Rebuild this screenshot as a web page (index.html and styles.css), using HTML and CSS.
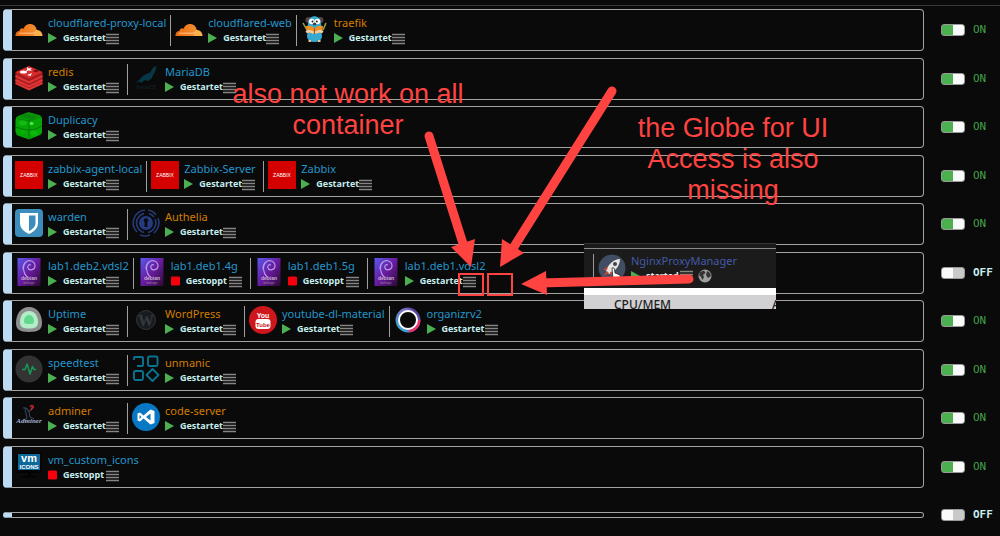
FILE: index.html
```html
<!DOCTYPE html>
<html lang="de">
<head>
<meta charset="utf-8">
<meta name="viewport" content="width=device-width, initial-scale=1">
<title>Docker</title>
<link rel="stylesheet" href="styles.css">
</head>
<body>
<svg class="defs" aria-hidden="true">
  <defs>
    <linearGradient id="g-cloud" x1="0" x2="1"><stop offset="0" stop-color="#e86a10"/><stop offset="1" stop-color="#f79031"/></linearGradient>
    <linearGradient id="g-deb" x1="0" y1="0" x2="1" y2="1"><stop offset="0" stop-color="#5a58ee"/><stop offset=".5" stop-color="#6a1b9f"/><stop offset="1" stop-color="#2b0a35"/></linearGradient>
    <linearGradient id="g-ring" x1="1" y1="0" x2="0" y2="1"><stop offset="0" stop-color="#3b2a86"/><stop offset=".35" stop-color="#8575c8"/><stop offset=".7" stop-color="#4a86c8"/><stop offset="1" stop-color="#35b8dc"/></linearGradient>
  </defs>
  <symbol id="play" viewBox="0 0 9 10"><path d="M0 0L9 5L0 10Z" fill="#4caf50"/></symbol>
  <symbol id="stop" viewBox="0 0 10 10"><rect width="10" height="10" rx="1.5" fill="#f5000c"/></symbol>
  <symbol id="bars" viewBox="0 0 13 12"><path d="M0 1.500H13M0 4.500H13M0 7.500H13M0 10.500H13" stroke="#858585" stroke-width="1.400"/></symbol>
  <symbol id="cloudflare" viewBox="0 0 28 28">
    <path d="M.5 21C.3 17.800 2 16 4.500 16C4.500 13.500 7 12.500 8.500 13.700C10 10 13 8.700 15.500 9C19 9.300 21 11.500 21.700 14.500L20 21Z" fill="url(#g-cloud)"/>
    <path d="M18.500 21L20.500 15.200C24.500 14.500 27.700 17.500 27.500 21Z" fill="#fbb04c"/>
    <path d="M4 18.200H18.500Q20 18.200 20.500 16.500" fill="none" stroke="#ffd9a8" stroke-width=".8"/>
  </symbol>
  <symbol id="traefik" viewBox="0 0 28 28">
    <circle cx="7.500" cy="5" r="3" fill="#5b3f40"/><circle cx="19.500" cy="5" r="3" fill="#5b3f40"/>
    <path d="M2 8L6 15M25 8L22 15" stroke="#a5a644" stroke-width="1.500"/>
    <path d="M7 8C7-1 20-1 20 8L21 22Q20 27 13.500 27Q7 27 6 22Z" fill="#35a9cf"/>
    <circle cx="10.800" cy="6.500" r="2.800" fill="#fff"/><circle cx="16.400" cy="6.500" r="2.800" fill="#fff"/>
    <circle cx="11.500" cy="6.500" r="1" fill="#222"/><circle cx="15.800" cy="6.500" r="1" fill="#222"/>
    <ellipse cx="13.600" cy="9" rx="1.800" ry="1.200" fill="#4b3835"/>
    <path d="M5 11Q10 10 13.500 13Q17 10 22 11L21 18Q17 17 13.500 19Q10 17 6 18Z" fill="#ef9026"/>
    <path d="M5 17Q9 15 12.500 18M22 17Q18 15 14.500 18" stroke="#efd0ab" stroke-width="2.500" fill="none"/>
    <path d="M13.500 13V19" stroke="#9e5717"/><path d="M7.500 26H10M17 26H19.500" stroke="#e4c29c" stroke-width="2"/>
  </symbol>
  <symbol id="redis" viewBox="0 0 28 28">
    <path d="M.5 8V19L14 26L27.500 19V8Z" fill="#a51c20"/>
    <path d="M.5 8L14 2L27.500 8L14 14.500Z" fill="#d82b2c"/>
    <path d="M.5 12L14 18.500L27.500 12M.5 16L14 22.500L27.500 16M.5 19L14 25.500L27.500 19" fill="none" stroke="#df3535" stroke-width="2"/>
    <path d="M12 3L14 4.500L17 4L15.500 5.500L17 7L14 6.500L11 7L12 5.500Z" fill="#fff"/>
    <ellipse cx="8.500" cy="8" rx="3.500" ry="1.500" fill="#fff"/><path d="M12 11L17 9L15.500 12Z" fill="#fff"/><path d="M18 7L21 5.500L24 7L21 8.500Z" fill="#761014"/>
  </symbol>
  <symbol id="mariadb" viewBox="0 0 28 28">
    <path d="M24.500 2C21 3 20 5 18.500 8C16 10 12 10 9 14L4 19L8 17.500L9 19L13 16L16 17L20 14C21 10 24 8 24.500 2Z" fill="#073747"/>
  </symbol>
  <symbol id="cube" viewBox="0 0 28 28">
    <path d="M3 4Q.5 5 .5 8V20Q1 23 4 24L14 27.500L25 23Q27 22 27 20V7Q27 4 24 3L15 .5Q13 0 11 1Z" fill="#05a605"/>
    <path d="M3 5L12 1L25 4L15 8Z" fill="#068c06"/>
    <path d="M1 15Q8 18 14 18Q21 18 27 14M14 8V27" stroke="#057905" fill="none"/>
    <path d="M2 6Q9 9 14 8.500Q20 8 26 5M8 3Q13 3 19 6" stroke="#0b7a0b" fill="none" stroke-width=".8"/>
    <ellipse cx="16.500" cy="11.500" rx="2" ry="1.800" fill="#4be84b"/><ellipse cx="8" cy="11" rx="4" ry="2.500" fill="#10bd10"/><ellipse cx="19" cy="21" rx="4" ry="2.500" fill="#0bb80b"/><ellipse cx="8" cy="20" rx="3" ry="2" fill="#09b009"/>
  </symbol>
  <symbol id="zabbix" viewBox="0 0 28 28"><rect width="28" height="28" fill="#d40000"/></symbol>
  <symbol id="warden" viewBox="0 0 28 28"><rect width="28" height="28" rx="4" fill="#3c8dbc"/><path d="M5 4H23V14C23 20 18 23 14 25C10 23 5 20 5 14Z" fill="#fff"/><path d="M14 6.500H20.500V14C20.500 18 17 20.500 14 22Z" fill="#3c8dbc"/></symbol>
  <symbol id="authelia" viewBox="0 0 28 28">
    <g fill="none" stroke="#263a78" stroke-width="1.600"><path d="M13 1A13 13 0 0 0 5 23M22 24A13 13 0 0 0 26 9M16 1A13 13 0 0 1 24 6"/><path d="M12 4.500A9.800 9.800 0 0 0 4.500 14A9.800 9.800 0 0 0 12 23.500M16 23.500A9.800 9.800 0 0 0 23 10M8 26A13 13 0 0 0 18 26M17 4.500A10 10 0 0 1 22 8"/></g>
    <circle cx="14" cy="14" r="7" fill="#243b80"/><circle cx="14" cy="11.500" r="2.300" fill="#0a0b12"/><path d="M13 12H15L15.700 18H12.300Z" fill="#0a0b12"/>
  </symbol>
  <symbol id="debian" viewBox="0 0 28 28">
    <rect x="2.500" width="23" height="28" fill="url(#g-deb)"/>
    <path d="M12 19C8 15 7 8 11 4C14 1 20 3 20 8C20 12 14 13 13 10C12 8 14 6 16 7M11 4C8 6 8 9 8 11" fill="none" stroke="#b29be6" stroke-width="1.200"/>
  </symbol>
  <symbol id="uptime" viewBox="0 0 28 28"><path d="M14 1C23 1 27 9 27 17C27 23 24 26 14 26C4 26 1 23 1 17C1 9 5 1 14 1Z" fill="#8c8f8d"/><path d="M14 5C20 5 23 10 23 16C23 21 20 22.500 14 22.500C8 22.500 5 21 5 16C5 10 8 5 14 5Z" fill="#b2edc8"/><path d="M14 9C17 9 19 12 19 15C19 18 17 18 14 18C11 18 9 18 9 15C9 12 11 9 14 9Z" fill="#62d98d"/></symbol>
  <symbol id="wordpress" viewBox="0 0 28 28"><circle cx="14" cy="14" r="9.500" fill="#191b1e" stroke="#30343a"/></symbol>
  <symbol id="youtube" viewBox="0 0 28 28"><circle cx="14" cy="14" r="14" fill="#cd171c"/><rect x="6.500" y="13" width="15" height="10" rx="3" fill="#fff"/></symbol>
  <symbol id="organizr" viewBox="0 0 28 28"><circle cx="14" cy="14" r="10.700" fill="none" stroke="url(#g-ring)" stroke-width="3.500"/><path d="M15 25A11 11 0 0 0 25 14" fill="none" stroke="#e9306d" stroke-width="3"/><circle cx="14" cy="14" r="9" fill="none" stroke="#fff" stroke-width="2"/></symbol>
  <symbol id="speed" viewBox="0 0 28 28"><circle cx="14" cy="14" r="13.500" fill="#333"/><path d="M7 14.500H10L12 9L15 19L17.500 11.500L19 14.500H21" fill="none" stroke="#159b57" stroke-width="1.500" stroke-linejoin="round"/></symbol>
  <symbol id="unmanic" viewBox="0 0 28 28"><g fill="none" stroke="#087392" stroke-width="1.900"><path d="M2 5V3Q2 2 3 2H10Q11 2 11 3V10Q11 11 10 11H5"/><rect x="2" y="16" width="9" height="9" rx="1.500"/><rect x="16" y="1.500" width="9.500" height="9.500" rx="1.500"/><path d="M20.500 14L26.500 20L20.500 26L14.500 20Z" stroke-linejoin="round"/></g></symbol>
  <symbol id="adminer" viewBox="0 0 28 28"><path d="M8 5C12 4 13 7 14 9C16 7 17 6 17 4M10 6L12 15L9 17M14 9L15 14L19 16" fill="none" stroke="#394558" stroke-width="1.100"/><path d="M15 4Q17 1 18.500 4L16 7" stroke="#d9252c" stroke-width="1.300" fill="none"/></symbol>
  <symbol id="code" viewBox="0 0 28 28"><circle cx="14" cy="14" r="14" fill="#0877c4"/><path d="M18.500 6.500L22.500 8V20L18.500 21.500L11.500 15.500L8 18.500L5.500 17.500V10.500L8 9.500L11.500 12.500ZM18.500 10.500L14 14L18.500 17.500ZM7.500 12V16L9.500 14Z" fill="#fff" fill-rule="evenodd"/></symbol>
  <symbol id="vm" viewBox="0 0 28 28"><path d="M1.500 1H26.500V21H1.500Z" fill="#030303"/><rect x="3" y="2" width="22" height="16" fill="#0e699b"/><path d="M13 20H16V24H21V25.500H7V24H13Z" fill="#020202"/></symbol>
</svg>

<main class="docker">
  <section class="row">
    <div class="folder">
      <article class="app"><svg class="logo"><use href="#cloudflare"/></svg><div class="info"><a class="name" href="#">cloudflared-proxy-local</a><span class="state"><svg class="mark"><use href="#play"/></svg><b>Gestartet</b><button class="menu" aria-label="Menü"><svg><use href="#bars"/></svg></button></span></div></article>
      <article class="app"><svg class="logo"><use href="#cloudflare"/></svg><div class="info"><a class="name" href="#">cloudflared-web</a><span class="state"><svg class="mark"><use href="#play"/></svg><b>Gestartet</b><button class="menu" aria-label="Menü"><svg><use href="#bars"/></svg></button></span></div></article>
      <article class="app"><svg class="logo"><use href="#traefik"/></svg><div class="info"><a class="name update" href="#">traefik</a><span class="state"><svg class="mark"><use href="#play"/></svg><b>Gestartet</b><button class="menu" aria-label="Menü"><svg><use href="#bars"/></svg></button></span></div></article>
    </div>
    <label class="auto"><input type="checkbox" checked><span>ON</span></label>
  </section>
  <section class="row">
    <div class="folder">
      <article class="app"><svg class="logo"><use href="#redis"/></svg><div class="info"><a class="name update" href="#">redis</a><span class="state"><svg class="mark"><use href="#play"/></svg><b>Gestartet</b><button class="menu" aria-label="Menü"><svg><use href="#bars"/></svg></button></span></div></article>
      <article class="app"><svg class="logo"><use href="#mariadb"/><text x="14" y="25" class="logo-mariadb">MariaDB</text></svg><div class="info"><a class="name" href="#">MariaDB</a><span class="state"><svg class="mark"><use href="#play"/></svg><b>Gestartet</b><button class="menu" aria-label="Menü"><svg><use href="#bars"/></svg></button></span></div></article>
    </div>
    <label class="auto"><input type="checkbox" checked><span>ON</span></label>
  </section>
  <section class="row">
    <div class="folder">
      <article class="app"><svg class="logo"><use href="#cube"/></svg><div class="info"><a class="name" href="#">Duplicacy</a><span class="state"><svg class="mark"><use href="#play"/></svg><b>Gestartet</b><button class="menu" aria-label="Menü"><svg><use href="#bars"/></svg></button></span></div></article>
    </div>
    <label class="auto"><input type="checkbox" checked><span>ON</span></label>
  </section>
  <section class="row">
    <div class="folder">
      <article class="app"><svg class="logo"><use href="#zabbix"/><text x="14" y="16" class="logo-zabbix">ZABBIX</text></svg><div class="info"><a class="name" href="#">zabbix-agent-local</a><span class="state"><svg class="mark"><use href="#play"/></svg><b>Gestartet</b><button class="menu" aria-label="Menü"><svg><use href="#bars"/></svg></button></span></div></article>
      <article class="app"><svg class="logo"><use href="#zabbix"/><text x="14" y="16" class="logo-zabbix">ZABBIX</text></svg><div class="info"><a class="name" href="#">Zabbix-Server</a><span class="state"><svg class="mark"><use href="#play"/></svg><b>Gestartet</b><button class="menu" aria-label="Menü"><svg><use href="#bars"/></svg></button></span></div></article>
      <article class="app"><svg class="logo"><use href="#zabbix"/><text x="14" y="16" class="logo-zabbix">ZABBIX</text></svg><div class="info"><a class="name" href="#">Zabbix</a><span class="state"><svg class="mark"><use href="#play"/></svg><b>Gestartet</b><button class="menu" aria-label="Menü"><svg><use href="#bars"/></svg></button></span></div></article>
    </div>
    <label class="auto"><input type="checkbox" checked><span>ON</span></label>
  </section>
  <section class="row">
    <div class="folder">
      <article class="app"><svg class="logo"><use href="#warden"/></svg><div class="info"><a class="name" href="#">warden</a><span class="state"><svg class="mark"><use href="#play"/></svg><b>Gestartet</b><button class="menu" aria-label="Menü"><svg><use href="#bars"/></svg></button></span></div></article>
      <article class="app"><svg class="logo"><use href="#authelia"/></svg><div class="info"><a class="name update" href="#">Authelia</a><span class="state"><svg class="mark"><use href="#play"/></svg><b>Gestartet</b><button class="menu" aria-label="Menü"><svg><use href="#bars"/></svg></button></span></div></article>
    </div>
    <label class="auto"><input type="checkbox" checked><span>ON</span></label>
  </section>
  <section class="row">
    <div class="folder">
      <article class="app"><svg class="logo"><use href="#debian"/><text x="14" y="22" class="logo-debian">debian</text><text x="14" y="26" class="logo-debian-sub">bullseye</text></svg><div class="info"><a class="name" href="#">lab1.deb2.vdsl2</a><span class="state"><svg class="mark"><use href="#play"/></svg><b>Gestartet</b><button class="menu" aria-label="Menü"><svg><use href="#bars"/></svg></button></span></div></article>
      <article class="app"><svg class="logo"><use href="#debian"/><text x="14" y="22" class="logo-debian">debian</text><text x="14" y="26" class="logo-debian-sub">bullseye</text></svg><div class="info"><a class="name" href="#">lab1.deb1.4g</a><span class="state"><svg class="mark"><use href="#stop"/></svg><b>Gestoppt</b><button class="menu" aria-label="Menü"><svg><use href="#bars"/></svg></button></span></div></article>
      <article class="app"><svg class="logo"><use href="#debian"/><text x="14" y="22" class="logo-debian">debian</text><text x="14" y="26" class="logo-debian-sub">bullseye</text></svg><div class="info"><a class="name" href="#">lab1.deb1.5g</a><span class="state"><svg class="mark"><use href="#stop"/></svg><b>Gestoppt</b><button class="menu" aria-label="Menü"><svg><use href="#bars"/></svg></button></span></div></article>
      <article class="app"><svg class="logo"><use href="#debian"/><text x="14" y="22" class="logo-debian">debian</text><text x="14" y="26" class="logo-debian-sub">bullseye</text></svg><div class="info"><a class="name" href="#">lab1.deb1.vdsl2</a><span class="state"><svg class="mark"><use href="#play"/></svg><b>Gestartet</b><button class="menu" aria-label="Menü"><svg><use href="#bars"/></svg></button></span></div></article>
    </div>
    <label class="auto"><input type="checkbox"><span>OFF</span></label>
  </section>
  <section class="row">
    <div class="folder">
      <article class="app"><svg class="logo"><use href="#uptime"/></svg><div class="info"><a class="name" href="#">Uptime</a><span class="state"><svg class="mark"><use href="#play"/></svg><b>Gestartet</b><button class="menu" aria-label="Menü"><svg><use href="#bars"/></svg></button></span></div></article>
      <article class="app"><svg class="logo"><use href="#wordpress"/><text x="14" y="20" class="logo-wp">W</text></svg><div class="info"><a class="name update" href="#">WordPress</a><span class="state"><svg class="mark"><use href="#play"/></svg><b>Gestartet</b><button class="menu" aria-label="Menü"><svg><use href="#bars"/></svg></button></span></div></article>
      <article class="app"><svg class="logo"><use href="#youtube"/><text x="14" y="12" class="logo-yt">You</text><text x="14" y="21" class="logo-yt logo-yt-red">Tube</text></svg><div class="info"><a class="name" href="#">youtube-dl-material</a><span class="state"><svg class="mark"><use href="#play"/></svg><b>Gestartet</b><button class="menu" aria-label="Menü"><svg><use href="#bars"/></svg></button></span></div></article>
      <article class="app"><svg class="logo"><use href="#organizr"/></svg><div class="info"><a class="name" href="#">organizrv2</a><span class="state"><svg class="mark"><use href="#play"/></svg><b>Gestartet</b><button class="menu" aria-label="Menü"><svg><use href="#bars"/></svg></button></span></div></article>
    </div>
    <label class="auto"><input type="checkbox" checked><span>ON</span></label>
  </section>
  <section class="row">
    <div class="folder">
      <article class="app"><svg class="logo"><use href="#speed"/></svg><div class="info"><a class="name" href="#">speedtest</a><span class="state"><svg class="mark"><use href="#play"/></svg><b>Gestartet</b><button class="menu" aria-label="Menü"><svg><use href="#bars"/></svg></button></span></div></article>
      <article class="app"><svg class="logo"><use href="#unmanic"/></svg><div class="info"><a class="name update" href="#">unmanic</a><span class="state"><svg class="mark"><use href="#play"/></svg><b>Gestartet</b><button class="menu" aria-label="Menü"><svg><use href="#bars"/></svg></button></span></div></article>
    </div>
    <label class="auto"><input type="checkbox" checked><span>ON</span></label>
  </section>
  <section class="row">
    <div class="folder">
      <article class="app"><svg class="logo"><use href="#adminer"/><text x="14" y="20" class="logo-adminer">Adminer</text></svg><div class="info"><a class="name update" href="#">adminer</a><span class="state"><svg class="mark"><use href="#play"/></svg><b>Gestartet</b><button class="menu" aria-label="Menü"><svg><use href="#bars"/></svg></button></span></div></article>
      <article class="app"><svg class="logo"><use href="#code"/></svg><div class="info"><a class="name update" href="#">code-server</a><span class="state"><svg class="mark"><use href="#play"/></svg><b>Gestartet</b><button class="menu" aria-label="Menü"><svg><use href="#bars"/></svg></button></span></div></article>
    </div>
    <label class="auto"><input type="checkbox" checked><span>ON</span></label>
  </section>
  <section class="row">
    <div class="folder">
      <article class="app"><svg class="logo"><use href="#vm"/><text x="14" y="10" class="logo-vm">vm</text><text x="14" y="17" class="logo-vm-sub">ICONS</text></svg><div class="info"><a class="name" href="#">vm_custom_icons</a><span class="state"><svg class="mark"><use href="#stop"/></svg><b>Gestoppt</b><button class="menu" aria-label="Menü"><svg><use href="#bars"/></svg></button></span></div></article>
    </div>
    <label class="auto"><input type="checkbox" checked><span>ON</span></label>
  </section>
  <section class="row empty">
    <div class="folder"></div>
    <label class="auto"><input type="checkbox"><span>OFF</span></label>
  </section>
</main>

<aside class="inset">
  <div class="inset-app">
    <svg class="rocket" viewBox="0 0 28 28"><circle cx="14" cy="14" r="13.500" fill="#414d62"/><path d="M8 17C10 10 16 5 22 5C22 11 18 17 11 20Z" fill="#e9e6e1"/><circle cx="17" cy="10" r="2" fill="#3b4659"/><path d="M10 12L5 16L9 16M16 17L13 22L12 18M9 17L5 22L11 19" fill="#c84a3b"/></svg>
    <div class="inset-info">
      <a class="inset-name" href="#">NginxProxyManager</a>
      <span class="inset-state"><svg class="mark"><use href="#play"/></svg><b>started</b><svg class="inset-bars"><use href="#bars"/></svg><svg class="globe" viewBox="0 0 14 14"><circle cx="7" cy="7" r="6.500" fill="#a0a0a0"/><path d="M2 3L6 1.500L7.500 4L5 6L6 8L4.500 11L3 8L1 6ZM9 2L12 4L13 7L10 9L8 6Z" fill="#343434"/></svg></span>
    </div>
  </div>
  <div class="inset-head"><span>CPU/MEM</span><span class="next">A</span></div>
</aside>

<p class="note note-menu">also not work on all container</p>
<p class="note note-globe">the Globe for UI Access is also missing</p>
<svg class="arrows" viewBox="0 0 1000 536" aria-hidden="true">
  <path d="M612 268Q614 267 614.500 269L615 273L620 275L620.500 281L618 284H613L609 278L611 277L613 279Z" fill="#fff" stroke="#222" stroke-width=".8"/>
  <g stroke="#ff4340" stroke-width="9" stroke-linecap="round"><path d="M429 136L465 250"/><path d="M612 91L512 250"/><path d="M689 279L540 283"/></g>
  <g fill="#ff4340"><path d="M471 267L451 247L475 239Z"/><path d="M500 267L502 239L524 253Z"/><path d="M521 284L546 271L547 295Z"/></g>
  <g fill="none" stroke="#ff4340" stroke-width="2"><rect x="459" y="274" width="24" height="21"/><rect x="488" y="274" width="24" height="21"/></g>
</svg>
</body>
</html>
```
FILE: styles.css
```css
* { box-sizing: border-box; }

body {
  position: relative;
  margin: 0;
  padding-top: 5px;
  background: #0a0a0a;
  color: #c6eeee;
  font: 11px/14px "Noto Sans", "Open Sans", sans-serif;
}

a { text-decoration: none; }

.defs { position: absolute; width: 0; height: 0; }

.docker {
  border-top: 1px solid #383838;
  padding: 3px 8px 13px 3px;
}

.row { display: flex; align-items: center; margin-bottom: 7px; }
.row:nth-child(even) { margin-bottom: 6px; }
.row:nth-last-child(2) { margin-bottom: 18px; }
.row.empty { margin-bottom: 0; }

.folder {
  flex: 1;
  display: flex;
  height: 42px;
  padding: 5px 0 3px 3px;
  border: 1px solid #a3a3a3;
  border-left: 9px solid #bddbf3;
  border-radius: 4px;
}

.empty { height: 18px; }
.empty .folder { height: 6px; padding: 0; border-radius: 3px; }

.app {
  display: flex;
  gap: 5px;
  padding-right: 4px;
  height: 31px;
}
.app + .app { border-left: 1px solid #a0a0a0; padding-left: 4px; }

.logo { flex: none; width: 28px; height: 28px; }

.info { min-width: 75px; margin-top: 1px; }
.name { display: block; color: #2496cc; white-space: nowrap; }
.name.update { color: #d27d00; }

.state { display: flex; align-items: center; height: 16px; }
.mark { flex: none; width: 9px; height: 10px; }
.state b {
  width: 43px;
  margin-left: 6px;
  font: bold 9px/14px "Open Sans", "Noto Sans", sans-serif;
}
.menu { padding: 0; border: 0; background: none; }
.menu svg { display: block; width: 13px; height: 12px; margin-top: 2px; }

.auto {
  flex: none;
  display: flex;
  align-items: center;
  gap: 8px;
  width: 51px;
  margin-left: 17px;
  color: #c6eeee;
  font: bold 11px/14px "DejaVu Sans Mono", monospace;
}
.auto:has(input:checked) { color: #43a047; font-weight: normal; }

.auto input {
  flex: none;
  appearance: none;
  width: 24px;
  height: 12px;
  margin: 0;
  border: 1px solid #999;
  border-radius: 3px;
  background: linear-gradient(90deg, #fafafa 50%, #c9c9c9 50%);
}
.auto input:checked { background: linear-gradient(90deg, #4caf50 50%, #fafafa 50%); }

.inset {
  position: absolute;
  top: 243px;
  left: 584px;
  width: 192px;
  background: #1b1b1b;
  border-top: 1px solid #333;
}
.inset-app {
  display: flex;
  gap: 5px;
  height: 40px;
  margin-top: 4px;
  padding: 5px 9px 0;
  border-top: 1px solid #8a8a8a;
}
.rocket { flex: none; width: 28px; height: 28px; margin-left: 4px; }
.inset-app::before { content: ""; width: 1px; height: 26px; margin-right: -5px; background: #999; }
.inset-name { display: block; color: #445aa5; }
.inset-state { display: flex; align-items: center; height: 16px; }
.inset-state b { width: 34px; margin: 0 0 0 6px; color: #eee; font-size: 9px; }
.inset-bars { width: 13px; height: 12px; }
.globe { width: 14px; height: 14px; margin-left: 5px; }
.inset-head {
  display: flex;
  justify-content: space-between;
  height: 21px;
  overflow: hidden;
  padding: 2px 0 0 30px;
  border-top: 7px solid #fff;
  background: #d1d1d3;
  color: #222;
  font-size: 12px;
  font-weight: 500;
  line-height: 16px;
}
.next { width: 4px; }

.note {
  position: absolute;
  margin: 0;
  color: #ff4340;
  font: 27px/31px "Liberation Sans", Arial, sans-serif;
  text-align: center;
}
.note-menu { top: 79px; left: 218px; width: 260px; }
.note-globe { top: 113px; left: 630px; width: 206px; }

.arrows {
  position: absolute;
  top: 0;
  left: 0;
  width: 1000px;
  height: 536px;
  pointer-events: none;
}

.logo-zabbix, .logo-mariadb, .logo-debian, .logo-debian-sub, .logo-wp,
.logo-yt, .logo-adminer, .logo-vm, .logo-vm-sub {
  text-anchor: middle;
  font-family: "Liberation Sans", sans-serif;
  fill: #fff;
}
.logo-zabbix { font-size: 5px; }
.logo-mariadb { font-size: 5px; fill: #122329; }
.logo-debian { font-size: 5px; fill: #c9add6; font-weight: bold; }
.logo-debian-sub { font-size: 3px; fill: #a287b0; }
.logo-wp { font: bold 16px "Liberation Serif", serif; fill: #343941; }
.logo-yt { font-size: 7px; font-weight: bold; }
.logo-yt-red { font-size: 6px; fill: #cd171c; }
.logo-adminer { font: italic bold 7px "Liberation Serif", serif; fill: #a6b2d4; }
.logo-vm { font-size: 11px; font-weight: bold; }
.logo-vm-sub { font-size: 6px; font-weight: bold; }
```
